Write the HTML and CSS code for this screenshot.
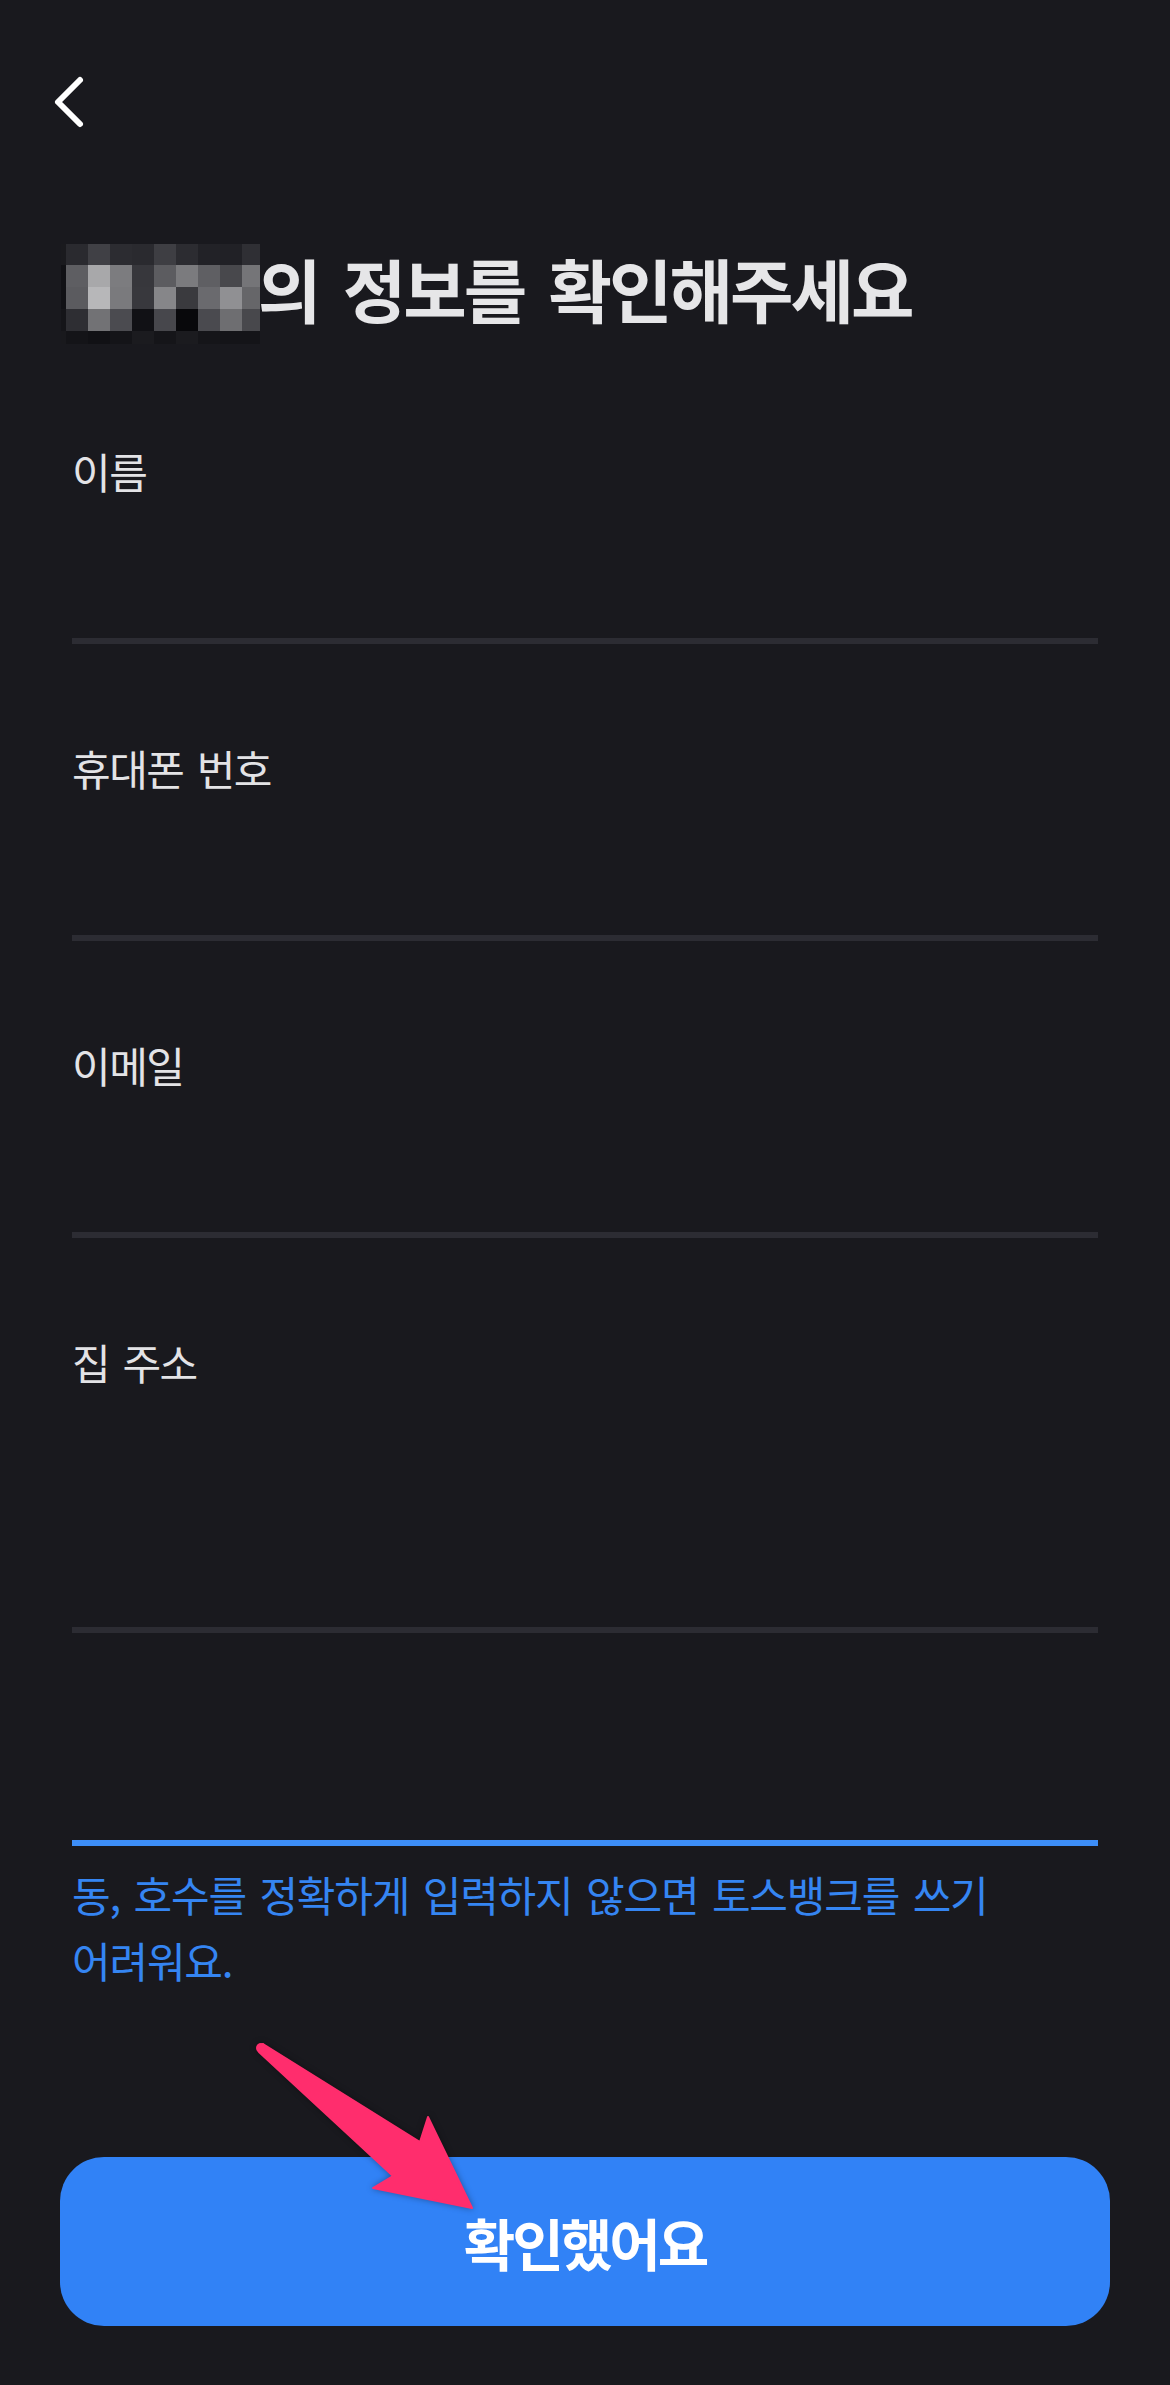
FILE: index.html
```html
<!DOCTYPE html>
<html lang="ko">
<head>
  <meta charset="UTF-8" />
  <meta name="viewport" content="width=device-width, initial-scale=1.0"/>
  <title>정보 확인</title>
  <link rel="stylesheet" href="styles.css">
</head>
<body>
  <div class="screen">
    <header class="nav">
      <button class="back" aria-label="뒤로">
        <svg width="40" height="60" viewBox="0 0 40 60">
          <path d="M30 10 L8 32 L30 54" fill="none" stroke="#ffffff" stroke-width="6" stroke-linecap="round" stroke-linejoin="round"/>
        </svg>
      </button>
    </header>

    <h1 class="title">
      <span class="mosaic" id="mosaic"></span>
      <span class="title-text">의 정보를 확인해주세요</span>
    </h1>

    <div class="form">
      <div class="field">
        <label>이름</label>
        <div class="input"></div>
      </div>
      <div class="field">
        <label>휴대폰 번호</label>
        <div class="input"></div>
      </div>
      <div class="field">
        <label>이메일</label>
        <div class="input"></div>
      </div>
      <div class="field">
        <label>집 주소</label>
        <div class="input address"></div>
      </div>
      <div class="field detail">
        <div class="input focused"></div>
      </div>
      <p class="hint">동, 호수를 정확하게 입력하지 않으면 토스뱅크를 쓰기 어려워요.</p>
    </div>

    <button class="confirm">확인했어요</button>

    <!-- annotation arrow pointing at the button -->
    <svg class="arrow" width="230" height="180" viewBox="0 0 230 180">
      <polygon points="13,9 170,107 178,82 222,173 123,153 143,141 9,17" fill="#ff2d6d" stroke="#ff2d6d" stroke-width="2" stroke-linejoin="round"/>
      <circle cx="11" cy="13" r="5" fill="#ff2d6d"/>
    </svg>
  </div>

  <script>
    // blurred name: grey levels of the mosaic cells, row by row
    const cells = [
      ['1a1a1e','2a2a2f','404045','2c2c31','2a2a2f','3e3e43','2c2c31','222227','212126','2f2f34'],
      ['111115','5e5e62','a8a8aa','7c7c7f','37373c','5c5c60','7b7b7e','5f5f63','48484c','757578'],
      ['111115','5b5b5f','b7b7b9','7a7a7d','38383d','868689','3a3a3e','6a6a6e','909093','666669'],
      ['151519','2e2e33','727275','4b4b50','111115','47474c','08080b','4a4a4f','6e6e71','48484c'],
      ['19191d','141418','111115','141418','1b1b1f','151519','1b1b1f','151519','141418','141418']
    ];
    const mosaic = document.getElementById('mosaic');
    cells.forEach(row => {
      row.forEach(hex => {
        const cell = document.createElement('span');
        cell.style.background = '#' + hex;
        mosaic.appendChild(cell);
      });
    });
  </script>
</body>
</html>
```

FILE: styles.css
```css
* {
  margin: 0;
  padding: 0;
  box-sizing: border-box;
}

body {
  background-color: #19191e;
  font-family: "Noto Sans CJK KR", "Noto Sans", sans-serif;
  color: #e6e6e8;
}

.screen {
  position: relative;
  width: 1170px;
  min-height: 2385px;
}

.nav {
  height: 130px;
  padding: 70px 0 0 50px;
}

.back {
  display: block;
  border: none;
  background: transparent;
  cursor: pointer;
}

.back svg {
  display: block;
}

.title {
  display: flex;
  align-items: center;
  margin: 114px 0 3px;
  padding-left: 61px;
  height: 100px;
}

.mosaic {
  display: grid;
  grid-template-columns: 5px repeat(8, 22px) 18px;
  grid-template-rows: 21px 22px 22px 22px 13px;
  flex-shrink: 0;
}

.title-text {
  margin-left: -2px;
  margin-bottom: 12px;
  font-size: 69px;
  font-weight: 700;
  line-height: 80px;
  letter-spacing: -3px;
  word-spacing: 8px;
  color: #e6e6e8;
  white-space: nowrap;
}

.form {
  padding: 0 72px;
}

.field {
  padding-top: 96px;
}

.field label {
  display: block;
  font-size: 42px;
  font-weight: 400;
  line-height: 56px;
  letter-spacing: -1.5px;
  word-spacing: 3px;
  color: #e3e3e6;
}

.input {
  height: 145px;
  border-bottom: 6px solid #2c2c33;
}

.input.address {
  height: 243px;
}

.field.detail {
  padding-top: 0;
}

.input.focused {
  height: 213px;
  border-bottom-color: #3d8ef8;
}

.hint {
  margin-top: 15px;
  font-size: 42px;
  line-height: 66px;
  letter-spacing: -1.2px;
  word-spacing: 3px;
  word-break: keep-all;
  color: #3585f2;
}

.confirm {
  display: block;
  width: calc(100% - 120px);
  height: 169px;
  margin: 164px 60px 0;
  border: none;
  border-radius: 44px;
  background-color: #3182f6;
  color: #ffffff;
  font-family: "Noto Sans CJK KR", "Noto Sans", sans-serif;
  font-size: 56px;
  font-weight: 700;
  letter-spacing: -3px;
  cursor: pointer;
}

.arrow {
  position: absolute;
  left: 250px;
  top: 2035px;
  filter: drop-shadow(0 0 3px rgba(0, 0, 0, 0.35));
}
```
